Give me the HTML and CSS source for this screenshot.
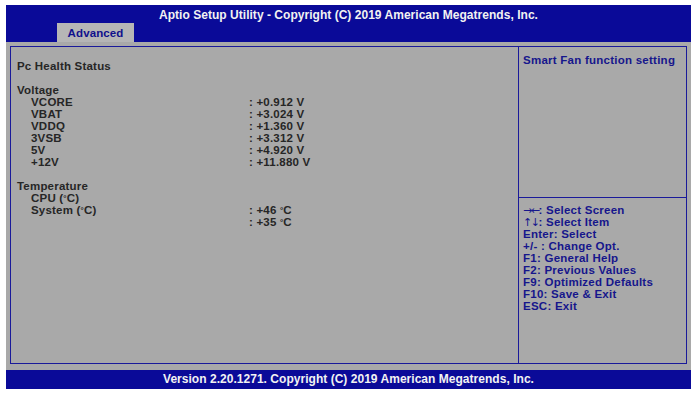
FILE: index.html
```html
<!DOCTYPE html>
<html>
<head>
<meta charset="utf-8">
<link rel="stylesheet" href="styles.css">
</head>
<body>
<div class="screen">
  <header class="top">
    <div class="title">Aptio Setup Utility - Copyright (C) 2019 American Megatrends, Inc.</div>
    <nav class="tabs"><span class="tab">Advanced</span></nav>
  </header>
  <main class="body">
    <div class="frame">
      <section class="left">
        <div class="row"><span>Pc Health Status</span></div>
        <div class="row blank"></div>
        <div class="row"><span>Voltage</span></div>
        <div class="row"><span class="sub">VCORE</span><span>: +0.912 V</span></div>
        <div class="row"><span class="sub">VBAT</span><span>: +3.024 V</span></div>
        <div class="row"><span class="sub">VDDQ</span><span>: +1.360 V</span></div>
        <div class="row"><span class="sub">3VSB</span><span>: +3.312 V</span></div>
        <div class="row"><span class="sub">5V</span><span>: +4.920 V</span></div>
        <div class="row"><span class="sub">+12V</span><span>: +11.880 V</span></div>
        <div class="row blank"></div>
        <div class="row"><span>Temperature</span></div>
        <div class="row"><span class="sub">CPU (<span class="deg">°</span>C)</span></div>
        <div class="row"><span class="sub">System (<span class="deg">°</span>C)</span><span>: +46 <span class="deg">°</span>C</span></div>
        <div class="row"><span class="sub"></span><span>: +35 <span class="deg">°</span>C</span></div>
      </section>
      <aside class="help">
        <div class="help-desc">Smart Fan function setting</div>
        <div class="help-keys">
          <div class="key"><span class="arr">→←</span>: Select Screen</div>
          <div class="key"><span class="arr">↑↓</span>: Select Item</div>
          <div class="key">Enter: Select</div>
          <div class="key">+/- : Change Opt.</div>
          <div class="key">F1: General Help</div>
          <div class="key">F2: Previous Values</div>
          <div class="key">F9: Optimized Defaults</div>
          <div class="key">F10: Save &amp; Exit</div>
          <div class="key">ESC: Exit</div>
        </div>
      </aside>
    </div>
  </main>
  <footer class="bottom">Version 2.20.1271. Copyright (C) 2019 American Megatrends, Inc.</footer>
</div>
</body>
</html>
```
FILE: styles.css
```css
html, body {
  margin: 0;
  padding: 0;
  background: #ffffff;
}
body {
  font-family: "Liberation Sans", Arial, sans-serif;
  font-weight: bold;
  font-size: 11.5px;
}
.screen {
  margin: 5px 0 0 6px;
  width: 685px;
  display: flex;
  flex-direction: column;
}
.top {
  background: #0a0a98;
  height: 37px;
  display: flex;
  flex-direction: column;
}
.title {
  color: #f2f2f2;
  font-size: 12px;
  letter-spacing: 0.03px;
  text-align: center;
  height: 18px;
  line-height: 20px;
}
.tabs {
  display: flex;
  padding-left: 51px;
}
.tab {
  background: #b6b6b6;
  color: #10108c;
  font-size: 11.5px;
  letter-spacing: 0.1px;
  width: 77px;
  height: 19px;
  line-height: 20px;
  text-align: center;
}
.body {
  background: #a9a9a9;
  height: 328px;
  box-sizing: border-box;
  padding: 4px 4px 6px 4px;
}
.frame {
  border: 1px solid #1a1a9a;
  height: 318px;
  box-sizing: border-box;
  display: flex;
}
.left {
  width: 508px;
  box-sizing: border-box;
  padding: 13px 0 0 6px;
  border-right: 1px solid #1a1a9a;
  color: #262626;
  letter-spacing: 0.2px;
}
.row {
  display: grid;
  grid-template-columns: 232px auto;
  height: 12px;
  line-height: 12px;
}
.sub {
  padding-left: 14px;
}
.deg {
  font-size: 8px;
  vertical-align: 1px;
}
.help {
  flex: 1;
  display: flex;
  flex-direction: column;
  color: #16168c;
  font-size: 11.5px;
  letter-spacing: 0.25px;
}
.help-desc {
  height: 151px;
  box-sizing: border-box;
  padding: 7px 0 0 4px;
  line-height: 12px;
  border-bottom: 1px solid #1a1a9a;
}
.help-keys {
  padding: 6px 0 0 4px;
}
.key {
  height: 12px;
  line-height: 12px;
  white-space: nowrap;
}
.arr {
  font-family: "DejaVu Sans", sans-serif;
  font-weight: normal;
  font-size: 11px;
  line-height: 0;
  letter-spacing: -1.5px;
}
.bottom {
  background: #0a0a98;
  color: #f2f2f2;
  font-size: 12px;
  letter-spacing: 0.03px;
  text-align: center;
  height: 19px;
  line-height: 19px;
}
```
